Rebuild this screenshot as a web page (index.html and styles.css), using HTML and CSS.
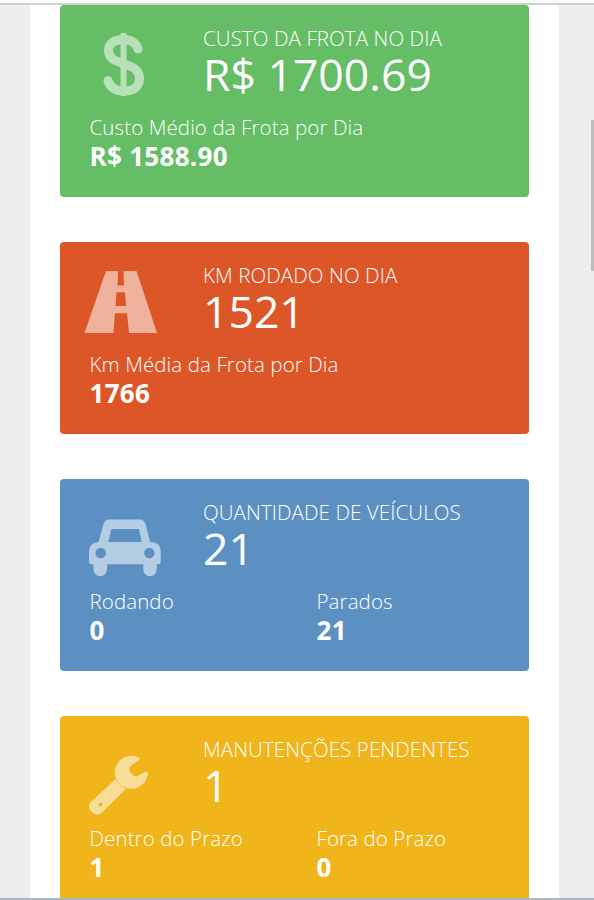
FILE: index.html
```html
<!DOCTYPE html>
<html lang="pt-BR">
    <head>
        <meta charset="utf-8">
        <title>Frota</title>
        <link rel="stylesheet" href="styles.css">
    </head>
    <body>
        <div class="page">
            <div class="panel">

                <div class="card green">
                    <div class="card-top">
                        <svg class="icon" viewBox="0 0 80 72">
                            <path d="M54 16C52 10 47 6.500 39.500 6.500C30 6.500 24.500 10.500 24.500 17.500C24.500 25 30 27.500 40 31C50 34 55.500 37.500 55.500 45.500C55.500 54.500 49 58 40 58C31 58 26 54.500 24 47.500" fill="none" stroke="#fff" stroke-width="9" stroke-linecap="round"/>
                            <path d="M39.500 0V63" fill="none" stroke="#fff" stroke-width="6"/>
                        </svg>
                        <div class="main">
                            <div class="label">CUSTO DA FROTA NO DIA</div>
                            <div class="number">R$ 1700.69</div>
                        </div>
                    </div>
                    <div class="card-bottom">
                        <div class="col">
                            <div class="label">Custo Médio da Frota por Dia</div>
                            <div class="value">R$ 1588.90</div>
                        </div>
                    </div>
                </div>

                <div class="card red">
                    <div class="card-top">
                        <svg class="icon" viewBox="0 0 80 72">
                            <path fill="#fff" fill-rule="evenodd" d="M22 1H34L33.500 15.500H40L39.500 1H52.500L73 63H45L43 43.300H31L29.300 63H.5ZM32.500 22.300L31.500 36H42L41 22.300Z"/>
                        </svg>
                        <div class="main">
                            <div class="label">KM RODADO NO DIA</div>
                            <div class="number">1521</div>
                        </div>
                    </div>
                    <div class="card-bottom">
                        <div class="col">
                            <div class="label">Km Média da Frota por Dia</div>
                            <div class="value">1766</div>
                        </div>
                    </div>
                </div>

                <div class="card blue">
                    <div class="card-top">
                        <svg class="icon" viewBox="0 0 80 72">
                            <path fill="#fff" fill-rule="evenodd" d="M25 12.500H56Q60 12.500 61.500 17L66 35Q76.700 35 76.700 44V55Q76.700 57.300 74 57.300H72.700V62.500A6.700 6.700 0 0 1 59.300 62.500V57.300H23V62.500A6.700 6.700 0 0 1 9.500 62.500V57.300H8Q5 57.300 5 55V44Q5 36 14.500 35L19.500 17Q21 12.500 25 12.500ZM27.300 22L24.300 35H57.700L55 22ZM16.700 40.800A5.200 5.200 0 1 0 16.700 51.200A5.200 5.200 0 1 0 16.700 40.800ZM65.300 40.800A5.200 5.200 0 1 0 65.300 51.200A5.200 5.200 0 1 0 65.300 40.800Z"/>
                        </svg>
                        <div class="main">
                            <div class="label">QUANTIDADE DE VEÍCULOS</div>
                            <div class="number">21</div>
                        </div>
                    </div>
                    <div class="card-bottom">
                        <div class="col">
                            <div class="label">Rodando</div>
                            <div class="value">0</div>
                        </div>
                        <div class="col">
                            <div class="label">Parados</div>
                            <div class="value">21</div>
                        </div>
                    </div>
                </div>

                <div class="card yellow">
                    <div class="card-top">
                        <svg class="icon" viewBox="0 0 80 72">
                            <path fill="#fff" d="M55.500 16L47.500 21Q45 23 45.500 26.500Q47 31 51.500 32.500Q54 32.500 56 30.500L62 27.500Q65 27.500 63.500 32A16.500 16.500 0 1 1 53.500 13Q57 14 55.500 16Z"/>
                            <path fill="#fff" fill-rule="evenodd" d="M31.500 35Q35 42 42 45L17.500 69Q13 72.500 8.500 68.500L6.500 66.500Q3 62 7 58ZM16.500 58.500A2 2 0 1 0 16.500 62.500A2 2 0 1 0 16.500 58.500Z"/>
                        </svg>
                        <div class="main">
                            <div class="label">MANUTENÇÕES PENDENTES</div>
                            <div class="number">1</div>
                        </div>
                    </div>
                    <div class="card-bottom">
                        <div class="col">
                            <div class="label">Dentro do Prazo</div>
                            <div class="value">1</div>
                        </div>
                        <div class="col">
                            <div class="label">Fora do Prazo</div>
                            <div class="value">0</div>
                        </div>
                    </div>
                </div>

            </div>
            <div class="scrollbar"></div>
        </div>
    </body>
</html>
```
FILE: styles.css
```css
* {
    box-sizing: border-box;
}

body {
    margin: 0;
    background-color: #eee;
    font-family: "Open Sans", sans-serif;
    color: white;
}

.page {
    position: relative;
    height: 900px;
    overflow: hidden;
    border-top: 3px solid #fafafa;
    border-bottom: 2px solid #a9b9c4;
}

/* thin line under the browser bar */
.page::before {
    content: "";
    display: block;
    height: 2px;
    background-color: #cfcfcf;
}

.panel {
    width: 529px;
    margin-left: 30px;
    padding: 0 30px;
    background-color: white;
}

.card {
    height: 192px;
    margin-bottom: 45px;
    padding: 19px 30px 0 24px;
    border-radius: 4px;
}

.green {
    background-color: #65bd65;
}

.red {
    background-color: #dd5627;
}

.blue {
    background-color: #5c90c2;
}

.yellow {
    background-color: #efb51a;
}

.card-top {
    display: flex;
    height: 89px;
}

.icon {
    width: 80px;
    height: 72px;
    margin: 9px 39px 0 0;
    opacity: 0.55;
}

.label {
    height: 28px;
    font-size: 20.5px;
    font-weight: 300;
    line-height: 28px;
    letter-spacing: 0.1px;
    white-space: nowrap;
}

.number {
    font-size: 44.5px;
    line-height: 43px;
    white-space: nowrap;
}

.card-bottom {
    display: flex;
    padding-left: 5.5px;
}

.col {
    width: 227px;
    flex: none;
}

.value {
    font-size: 26px;
    font-weight: bold;
    line-height: 30px;
    letter-spacing: 0.3px;
}

.scrollbar {
    position: absolute;
    top: 117px;
    right: 0;
    width: 3px;
    height: 151px;
    background-color: #bdbdbd;
}
```
